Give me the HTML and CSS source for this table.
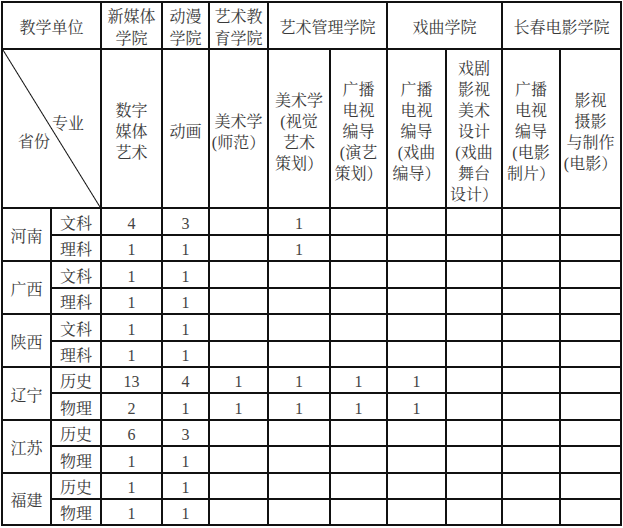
FILE: index.html
```html
<!DOCTYPE html>
<html lang="zh-CN">
<head>
<meta charset="utf-8">
<title>招生计划</title>
<link rel="stylesheet" href="styles.css">
</head>
<body>
<div class="t">
  <div class="c h1 s2">教学单位</div>
  <div class="c h1">新媒体<br>学院</div>
  <div class="c h1">动漫<br>学院</div>
  <div class="c h1">艺术教<br>育学院</div>
  <div class="c h1 s2">艺术管理学院</div>
  <div class="c h1 s2">戏曲学院</div>
  <div class="c h1 s2">长春电影学院</div>

  <div class="corner s2">
    <span class="major">专业</span>
    <span class="prov">省份</span>
  </div>
  <div class="c h2">数字<br>媒体<br>艺术</div>
  <div class="c h2">动画</div>
  <div class="c h2">美术学<br>(师范）</div>
  <div class="c h2">美术学<br>(视觉<br>艺术<br>策划）</div>
  <div class="c h2">广播<br>电视<br>编导<br>(演艺<br>策划）</div>
  <div class="c h2">广播<br>电视<br>编导<br>(戏曲<br>编导）</div>
  <div class="c h2">戏剧<br>影视<br>美术<br>设计<br>(戏曲<br>舞台<br>设计）</div>
  <div class="c h2">广播<br>电视<br>编导<br>(电影<br>制片）</div>
  <div class="c h2">影视<br>摄影<br>与制作<br>(电影）</div>

  <div class="c r2">河南</div>
  <div class="c">文科</div><div class="c n">4</div><div class="c n">3</div><div class="c"></div><div class="c n">1</div><div class="c"></div><div class="c"></div><div class="c"></div><div class="c"></div><div class="c"></div>
  <div class="c">理科</div><div class="c n">1</div><div class="c n">1</div><div class="c"></div><div class="c n">1</div><div class="c"></div><div class="c"></div><div class="c"></div><div class="c"></div><div class="c"></div>

  <div class="c r2">广西</div>
  <div class="c">文科</div><div class="c n">1</div><div class="c n">1</div><div class="c"></div><div class="c"></div><div class="c"></div><div class="c"></div><div class="c"></div><div class="c"></div><div class="c"></div>
  <div class="c">理科</div><div class="c n">1</div><div class="c n">1</div><div class="c"></div><div class="c"></div><div class="c"></div><div class="c"></div><div class="c"></div><div class="c"></div><div class="c"></div>

  <div class="c r2">陕西</div>
  <div class="c">文科</div><div class="c n">1</div><div class="c n">1</div><div class="c"></div><div class="c"></div><div class="c"></div><div class="c"></div><div class="c"></div><div class="c"></div><div class="c"></div>
  <div class="c">理科</div><div class="c n">1</div><div class="c n">1</div><div class="c"></div><div class="c"></div><div class="c"></div><div class="c"></div><div class="c"></div><div class="c"></div><div class="c"></div>

  <div class="c r2">辽宁</div>
  <div class="c">历史</div><div class="c n">13</div><div class="c n">4</div><div class="c n">1</div><div class="c n">1</div><div class="c n">1</div><div class="c n">1</div><div class="c"></div><div class="c"></div><div class="c"></div>
  <div class="c">物理</div><div class="c n">2</div><div class="c n">1</div><div class="c n">1</div><div class="c n">1</div><div class="c n">1</div><div class="c n">1</div><div class="c"></div><div class="c"></div><div class="c"></div>

  <div class="c r2">江苏</div>
  <div class="c">历史</div><div class="c n">6</div><div class="c n">3</div><div class="c"></div><div class="c"></div><div class="c"></div><div class="c"></div><div class="c"></div><div class="c"></div><div class="c"></div>
  <div class="c">物理</div><div class="c n">1</div><div class="c n">1</div><div class="c"></div><div class="c"></div><div class="c"></div><div class="c"></div><div class="c"></div><div class="c"></div><div class="c"></div>

  <div class="c r2">福建</div>
  <div class="c">历史</div><div class="c n">1</div><div class="c n">1</div><div class="c"></div><div class="c"></div><div class="c"></div><div class="c"></div><div class="c"></div><div class="c"></div><div class="c"></div>
  <div class="c">物理</div><div class="c n">1</div><div class="c n">1</div><div class="c"></div><div class="c"></div><div class="c"></div><div class="c"></div><div class="c"></div><div class="c"></div><div class="c"></div>
</div>
</body>
</html>
```

FILE: styles.css
```css
html, body {
  margin: 0;
  padding: 0;
  background: #ffffff;
}

body {
  font-family: "Liberation Serif", "Noto Serif CJK SC", "Noto Sans CJK SC", serif;
  font-size: 16px;
  color: #3a3a3a;
}

.t {
  display: grid;
  grid-template-columns: 47px 48px 59px 45px 57px 60px 55px 57px 54px 56px 59px;
  grid-template-rows: 45px 157px 25px 24px 25px 24px 25px 24px 24px 25px 24px 25px 24px 24px;
  gap: 2px;
  padding: 2px;
  background: #111111;
  width: max-content;
  margin: 1px 0 0 1px;
}

.c {
  background: #ffffff;
  display: flex;
  align-items: center;
  justify-content: center;
  text-align: center;
  padding-top: 4px;
  box-sizing: border-box;
  line-height: 20px;
  white-space: nowrap;
}

.h1 {
  line-height: 22px;
}

.h2 {
  line-height: 21px;
  padding-top: 6px;
}

.s2 {
  grid-column: span 2;
}

.r2 {
  grid-row: span 2;
}

.n {
  color: #444444;
}

.corner {
  background:
    linear-gradient(to top right, #ffffff calc(50% - 1px), #111111 50%, #ffffff calc(50% + 1px));
  display: flex;
  flex-direction: column;
  justify-content: center;
  padding-top: 9px;
  line-height: 18px;
}

.major {
  align-self: flex-end;
  padding-right: 16px;
}

.prov {
  align-self: flex-start;
  padding-left: 15px;
}
```
